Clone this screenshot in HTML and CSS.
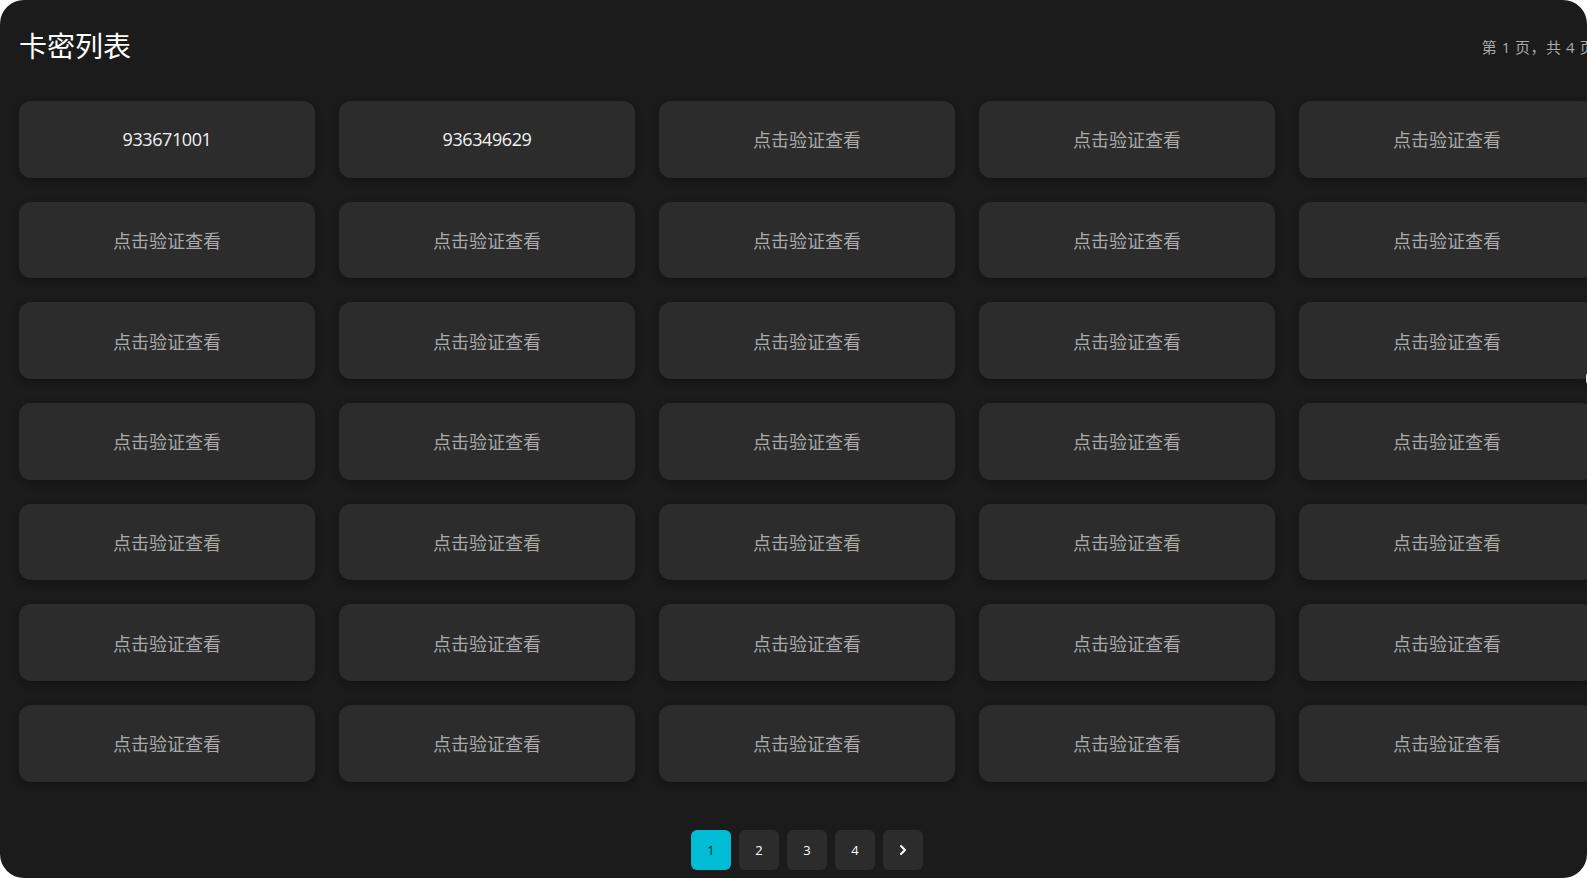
FILE: index.html
```html
<!DOCTYPE html>
<html lang="zh-CN">
<head>
    <meta charset="UTF-8">
    <meta name="viewport" content="width=device-width, initial-scale=1.0">
    <title>卡密列表</title>
    <link rel="stylesheet" href="styles.css">
</head>
<body>
    <div class="panel">
        <div class="inner">
            <div class="header">
                <h1 class="title">卡密列表</h1>
                <span class="page-info">第 1 页，共 4 页</span>
            </div>

            <div class="card-grid">
                <div class="card card-open">933671001</div>
                <div class="card card-open">936349629</div>
                <div class="card">点击验证查看</div>
                <div class="card">点击验证查看</div>
                <div class="card">点击验证查看</div>

                <div class="card">点击验证查看</div>
                <div class="card">点击验证查看</div>
                <div class="card">点击验证查看</div>
                <div class="card">点击验证查看</div>
                <div class="card">点击验证查看</div>

                <div class="card">点击验证查看</div>
                <div class="card">点击验证查看</div>
                <div class="card">点击验证查看</div>
                <div class="card">点击验证查看</div>
                <div class="card">点击验证查看</div>

                <div class="card">点击验证查看</div>
                <div class="card">点击验证查看</div>
                <div class="card">点击验证查看</div>
                <div class="card">点击验证查看</div>
                <div class="card">点击验证查看</div>

                <div class="card">点击验证查看</div>
                <div class="card">点击验证查看</div>
                <div class="card">点击验证查看</div>
                <div class="card">点击验证查看</div>
                <div class="card">点击验证查看</div>

                <div class="card">点击验证查看</div>
                <div class="card">点击验证查看</div>
                <div class="card">点击验证查看</div>
                <div class="card">点击验证查看</div>
                <div class="card">点击验证查看</div>

                <div class="card">点击验证查看</div>
                <div class="card">点击验证查看</div>
                <div class="card">点击验证查看</div>
                <div class="card">点击验证查看</div>
                <div class="card">点击验证查看</div>
            </div>

            <div class="pager">
                <button class="page-btn active">1</button>
                <button class="page-btn">2</button>
                <button class="page-btn">3</button>
                <button class="page-btn">4</button>
                <button class="page-btn">
                    <svg width="12" height="12" viewBox="0 0 12 12">
                        <path d="M4 2 L8 6 L4 10" fill="none" stroke="#ffffff" stroke-width="2" stroke-linecap="round" stroke-linejoin="round"/>
                    </svg>
                </button>
            </div>
        </div>
    </div>
    <div class="side-tab"></div>
</body>
</html>
```

FILE: styles.css
```css
body {
    margin: 0;
    background-color: #ffffff;
    font-family: "Open Sans", "Noto Sans CJK SC", sans-serif;
    overflow: hidden;
}

.panel {
    box-sizing: border-box;
    width: 100%;
    height: 878px;
    padding: 19px;
    background-color: #1b1b1b;
    border-radius: 24px;
    overflow: hidden;
}

.inner {
    width: 1576px;
}

.header {
    display: flex;
    justify-content: space-between;
    align-items: center;
    height: 55px;
    margin-bottom: 27px;
}

.title {
    margin: 0;
    font-size: 28px;
    font-weight: normal;
    line-height: 1.2;
    color: #ffffff;
}

.page-info {
    font-size: 15px;
    color: #aaaaaa;
    letter-spacing: 0.5px;
}

.card-grid {
    display: grid;
    grid-template-columns: repeat(5, 296px);
    grid-auto-rows: 76.7px;
    gap: 24px;
}

.card {
    display: flex;
    align-items: center;
    justify-content: center;
    background-color: #2c2c2c;
    border-radius: 12px;
    box-shadow: 0 3px 8px rgba(0, 0, 0, 0.3);
    font-size: 18px;
    color: #aaaaaa;
    cursor: pointer;
}

.card-open {
    color: #f2f2f2;
    letter-spacing: -0.4px;
}

.pager {
    display: flex;
    justify-content: center;
    gap: 8px;
    margin-top: 48px;
}

.page-btn {
    display: flex;
    align-items: center;
    justify-content: center;
    width: 40px;
    height: 40px;
    padding: 0;
    border: none;
    border-radius: 6px;
    background-color: #2c2c2c;
    color: #ffffff;
    font-family: "Open Sans", sans-serif;
    font-size: 13px;
}

.page-btn.active {
    background-color: #00bcd4;
    color: #1b1b1b;
}

.side-tab {
    position: fixed;
    top: 373px;
    right: -10px;
    width: 11px;
    height: 11px;
    background-color: #e0e0e0;
    border-radius: 3px;
}
```
